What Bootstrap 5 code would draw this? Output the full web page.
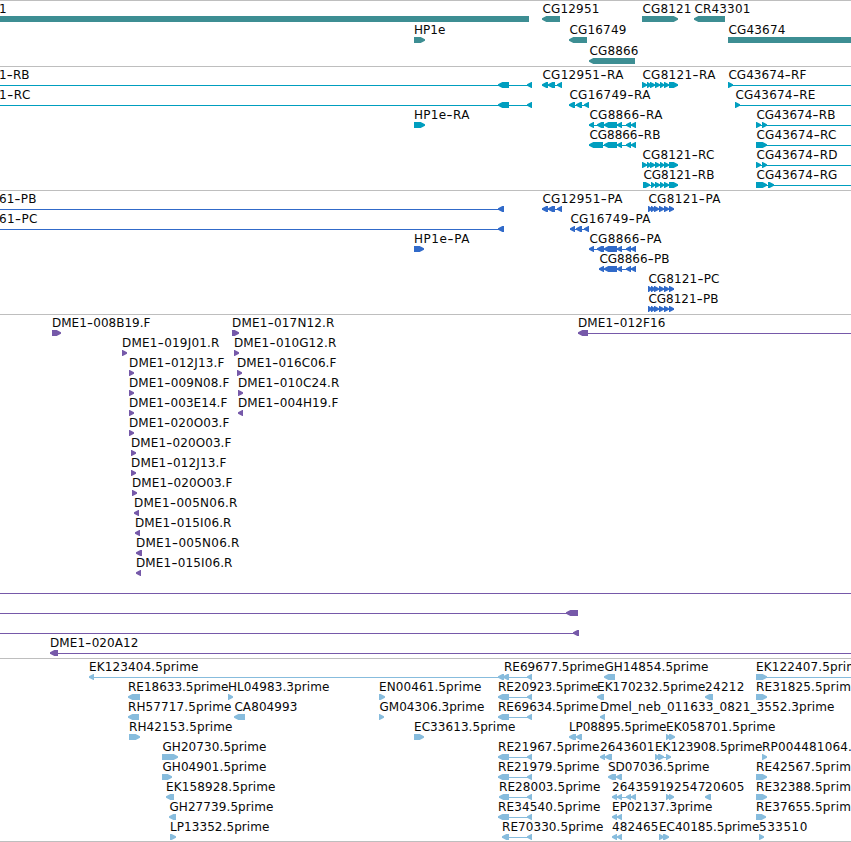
<!DOCTYPE html>
<html lang="en">
<head>
<meta charset="utf-8">
<meta name="viewport" content="width=device-width, initial-scale=1">
<title>Genome tracks</title>
<link href="https://cdn.jsdelivr.net/npm/bootstrap@5.3.0/dist/css/bootstrap.min.css" rel="stylesheet">
<style>
body { background: #fff; font-family: "DejaVu Sans", sans-serif; }
.genome-track { border-top: 1px solid #bebebe; }
.genome-track svg { width: 851px; overflow: hidden; }
.genome-track text { font-size: 12px; fill: #080808; }
.genome-track .wide-hyphen { font-family: Inter, sans-serif; font-size: 14px; }
.genome-track rect { shape-rendering: crispEdges; }
.genes { color: #3d8e93; height: 66px; }
.transcripts { color: #009ebf; height: 124px; }
.proteins { color: #316ac9; height: 124px; }
.clones { color: #7659a9; height: 344px; }
.reads { color: #87bcdd; height: 184px; border-bottom: 1px solid #bebebe; }
</style>
<script src="https://cdn.jsdelivr.net/npm/bootstrap@5.3.0/dist/js/bootstrap.bundle.min.js"></script>
</head>
<body>
<main class="container-fluid p-0 d-flex flex-column overflow-hidden">
  <section class="genome-track genes"></section>
  <section class="genome-track transcripts"></section>
  <section class="genome-track proteins"></section>
  <section class="genome-track clones"></section>
  <section class="genome-track reads"></section>
</main>
<script>
// Feature: row | label | label left | label right | strand (L, R, B = plain block) | exons | optional intron line
const tracks = {
genes: `0|1|-1|6|B|0-529
0|CG12951|542|599|L|542-560
0|CG8121|642|691|R|642-678
0|CR43301|694|750|L|694-725
1|HP1e|414|445|R|414-425
1|CG16749|569|626|L|569-587
1|CG43674|728|785|B|728-851
2|CG8866|589|638|L|589-635`,
transcripts: `0|1-RB|-1|29|L|498-509,527-532|0-532
0|CG12951-RA|542|623|L|542-548,548-555,557-562|542-562
0|CG8121-RA|642|715|R|642-647,647-651,650-655,655-660,660-664,664-669,669-678|642-678
0|CG43674-RF|728|806|R|728-733|728-851
1|1-RC|-1|30|L|498-509,527-532|0-532
1|CG16749-RA|569|650|L|569-575,576-582,584-589|569-589
1|CG43674-RE|735|815|R|735-740|735-851
2|HP1e-RA|414|469|R|414-425
2|CG8866-RA|589|662|L|589-594,597-604,604-617,617-622,626-631,631-636|589-636
2|CG43674-RB|756|835|R|756-761,762-767|756-851
3|CG8866-RB|589|660|L|589-603,604-617,617-622,626-631,631-636|589-636
3|CG43674-RC|756|836|R|756-767|756-851
4|CG8121-RC|642|714|R|642-647,647-651,650-655,655-660,660-664,664-669,669-678|642-678
4|CG43674-RD|756|837|R|756-761,762-767|756-851
5|CG8121-RB|643|714|R|643-650,651-655,655-660,660-664,664-669,669-678|643-678
5|CG43674-RG|756|837|R|756-767,768-774|756-851`,
proteins: `0|61-PB|-1|36|L|498-504|0-504
0|CG12951-PA|542|622|L|542-548,548-555,557-562|542-562
0|CG8121-PA|648|720|R|648-652,651-655,654-659,659-664,664-669,669-674|648-674
1|61-PC|-1|37|L|498-504|0-504
1|CG16749-PA|570|650|L|570-575,576-582,584-589|570-589
2|HP1e-PA|414|469|R|414-424
2|CG8866-PA|589|661|L|589-594,597-604,604-617,617-622,626-631,631-636|589-636
3|CG8866-PB|599|669|L|599-604,604-617,617-622,626-631,631-636|599-636
4|CG8121-PC|648|719|R|648-652,651-655,654-659,659-664,664-669,669-674|648-674
5|CG8121-PB|648|718|R|648-652,651-655,654-659,659-664,664-669,669-674|648-674`,
clones: `0|DME1-008B19.F|52|150|R|52-61
0|DME1-017N12.R|232|334|R|232-239
0|DME1-012F16|578|665|L|578-588|578-851
1|DME1-019J01.R|122|219|R|122-127
1|DME1-010G12.R|234|336|R|234-239
2|DME1-012J13.F|129|224|R|129-134
2|DME1-016C06.F|237|336|R|237-242
3|DME1-009N08.F|129|229|R|129-134
3|DME1-010C24.R|238|339|R|238-243
4|DME1-003E14.F|129|227|R|129-134
4|DME1-004H19.F|238|338|L|238-243
5|DME1-020O03.F|129|229|R|129-134
6|DME1-020O03.F|131|231|R|131-136
7|DME1-012J13.F|131|226|R|131-136
8|DME1-020O03.F|132|232|R|132-137
9|DME1-005N06.R|134|237|L|134-139
10|DME1-015I06.R|135|231|L|135-140
11|DME1-005N06.R|136|239|L|136-142
12|DME1-015I06.R|136|232|L|136-141
13||0|0|L||0-851
14||0|0|L|566-578|0-578
15||0|0|L|573-579|0-579
16|DME1-020A12|50|138|L|50-58|50-851`,
reads: `0|EK123404.5prime|89|198|L|89-94,498-504,503-509|89-509
0|RE69677.5prime|504|604|L|527-532|504-532
0|GH14854.5prime|604|708|L|604-615
0|EK122407.5prime|756|865|R|756-767|756-851
1|RE18633.5prime|128|228|L|128-140
1|HL04983.3prime|228|329|R|228-233
1|EN00461.5prime|379|481|R|379-385
1|RE20923.5prime|498|598|L|498-509,527-532|498-532
1|EK170232.5prime|597|705|L|597-604
1|24212|705|744|L|705-713
1|RE31825.5prime|756|858|R|756-767
2|RH57717.5prime|128|231|L|128-139
2|CA804993|234|297|L|234-245
2|GM04306.3prime|379|484|R|379-384
2|RE69634.5prime|498|598|L|498-509,527-532|498-532
2|Dmel_neb_011633_0821_3552.3prime|600|834|L|600-605
3|RH42153.5prime|129|232|R|129-140
3|EC33613.5prime|414|515|R|414-424
3|LP08895.5prime|569|666|L|569-576,576-582
3|EK058701.5prime|666|775|R|666-670,669-675
4|GH20730.5prime|162|266|R|162-178
4|RE21967.5prime|498|599|L|498-509,527-532|498-532
4|2643601|600|654|L|600-605,605-612
4|EK123908.5prime|655|762|R|655-659,658-664,666-671|655-671
4|RP004481064.5prime|762|895|R|762-767
5|GH04901.5prime|162|266|R|162-172
5|RE21979.5prime|498|599|L|498-509,527-532|498-532
5|SD07036.5prime|608|709|L|608-616,616-622
5|RE42567.5prime|756|858|R|756-767
6|EK158928.5prime|166|275|L|166-174
6|RE28003.5prime|499|600|L|499-509,527-532|499-532
6|2643591|612|666|L|612-617,617-622,626-631,631-636|612-636
6|92547|666|705|R|666-670,669-674
6|20605|705|744|L|705-711
6|RE32388.5prime|756|858|R|756-767
7|GH27739.5prime|169|273|L|169-176
7|RE34540.5prime|498|600|L|498-509,527-532|498-532
7|EP02137.3prime|612|712|L|612-617,617-622
7|RE37655.5prime|756|858|R|756-766
8|LP13352.5prime|170|269|R|170-176
8|RE70330.5prime|502|603|L|502-509,527-532|502-532
8|482465|612|658|L|612-617,617-622
8|EC40185.5prime|659|759|R|659-664,663-669
8|533510|759|807|R|759-764`
};
const NS = 'http://www.w3.org/2000/svg';
function add(parent, name, attrs, content) {
  const el = document.createElementNS(NS, name);
  for (const k in attrs) el.setAttribute(k, attrs[k]);
  if (content) el.textContent = content;
  parent.appendChild(el);
  return el;
}
for (const [name, list] of Object.entries(tracks)) {
  const host = document.querySelector('.' + name);
  const svg = add(host, 'svg', { class: 'd-block h-100', fill: 'currentColor' });
  for (const item of list.split('\n')) {
    const [row, label, x1, x2, strand, exons, intron] = item.split('|');
    const y = row * (name === 'genes' ? 21 : 20) - 1;
    if (intron) {
      const [a, b] = intron.split('-');
      add(svg, 'rect', { x: a, y: y + 19, width: b - a, height: 1 });
    }
    for (const e of exons ? exons.split(',') : []) {
      const [a, b] = e.split('-').map(Number), t = y + 16, d = t + 6;
      const tip = Math.min(5, b - a);
      if (strand === 'B') add(svg, 'rect', { x: a, y: t, width: b - a, height: 6 });
      else if (strand === 'L') add(svg, 'path', { d: `M${b} ${t}H${a + tip - .7}L${a} ${t + 2.2}V${t + 3.8}L${a + tip - .7} ${d}H${b}Z` });
      else add(svg, 'path', { d: `M${a} ${t}H${b - tip + .7}L${b} ${t + 2.2}V${t + 3.8}L${b - tip + .7} ${d}H${a}Z` });
    }
    if (label) {
      const x = Number(x1) + (/^[CG]/.test(label) ? 0.4 : 0);
      const t = add(svg, 'text', { x, y: y + 13, textLength: x2 - x + 0.4 });
      const [head, tail] = label.split('-');
      t.append(head);
      if (tail) {
        add(t, 'tspan', { class: 'wide-hyphen', dy: 1 }, '-');
        add(t, 'tspan', { dy: -1 }, tail);
      }
    }
  }
}
</script>
</body>
</html>
